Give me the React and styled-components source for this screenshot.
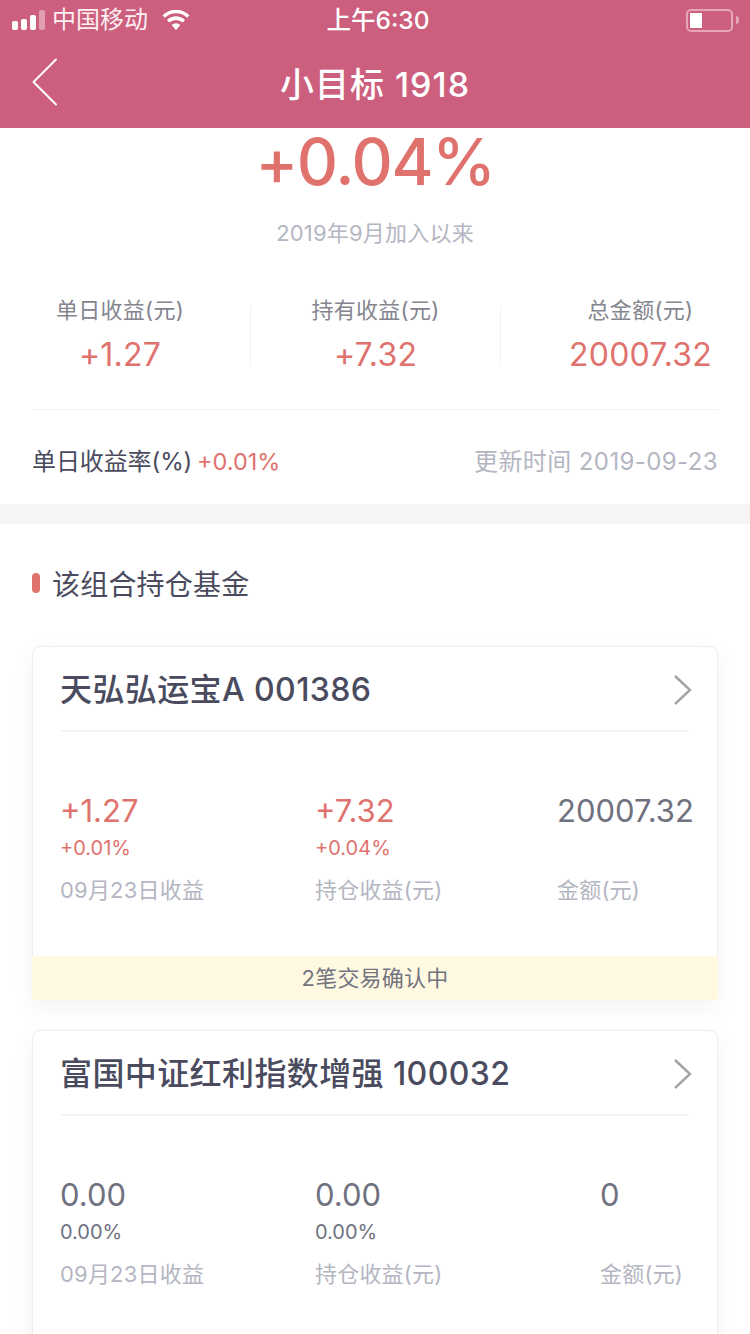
import React from "react";
import styled, { createGlobalStyle } from "styled-components";

const RED = "#e0726e";

const funds = [
  {
    name: "天弘弘运宝A 001386",
    active: true,
    pending: "2笔交易确认中",
    day: "+1.27",
    dayRate: "+0.01%",
    hold: "+7.32",
    holdRate: "+0.04%",
    amount: "20007.32",
    amountLeft: 557,
  },
  {
    name: "富国中证红利指数增强 100032",
    active: false,
    day: "0.00",
    dayRate: "0.00%",
    hold: "0.00",
    holdRate: "0.00%",
    amount: "0",
    amountLeft: 600,
  },
];

export default function App() {
  return (
    <>
      <GlobalStyle />
      <Page>
        <Header>
          <StatusBar>
            <StatusLeft>
              <Signal>
                <SignalBar $h={9} />
                <SignalBar $h={11} />
                <SignalBar $h={15} />
                <SignalBar $h={20} $dim />
              </Signal>
              <span>中国移动</span>
              <WifiIcon />
            </StatusLeft>
            <Clock>上午6:30</Clock>
            <Battery>
              <BatteryShell>
                <BatteryFill />
              </BatteryShell>
              <BatteryTip />
            </Battery>
          </StatusBar>
          <NavBar>
            <BackButton>
              <svg width="26" height="48" viewBox="0 0 26 48" fill="none">
                <path d="M24 1.5 L1.5 24 L24 46.5" stroke="#fff" strokeWidth="2" strokeLinecap="round" strokeLinejoin="round" />
              </svg>
            </BackButton>
            <NavTitle>小目标 1918</NavTitle>
          </NavBar>
        </Header>

        <Summary>
          <HeroValue>+0.04%</HeroValue>
          <HeroNote>2019年9月加入以来</HeroNote>
          <Stats>
            <Stat $pr={10}>
              <StatLabel>单日收益(元)</StatLabel>
              <StatValue>+1.27</StatValue>
            </Stat>
            <Stat $divider>
              <StatLabel>持有收益(元)</StatLabel>
              <StatValue>+7.32</StatValue>
            </Stat>
            <Stat $divider $pl={30}>
              <StatLabel>总金额(元)</StatLabel>
              <StatValue>20007.32</StatValue>
            </Stat>
          </Stats>
          <SummaryFooter>
            <RateBlock>
              单日收益率(%) <RateValue>+0.01%</RateValue>
            </RateBlock>
            <UpdateTime>更新时间 2019-09-23</UpdateTime>
          </SummaryFooter>
        </Summary>

        <Gap />

        <Holdings>
          <SectionTitle>
            <Marker />
            该组合持仓基金
          </SectionTitle>
          {funds.map((f) => (
            <Card key={f.name}>
              <CardHead>
                <FundName>{f.name}</FundName>
                <svg width="20" height="32" viewBox="0 0 20 32" fill="none">
                  <path d="M2 2 L17 16 L2 30" stroke="#a3a3a3" strokeWidth="2.4" />
                </svg>
              </CardHead>
              <Metrics>
                <Metric $left={27}>
                  <MetricValue $active={f.active}>{f.day}</MetricValue>
                  <MetricRate $active={f.active}>{f.dayRate}</MetricRate>
                  <MetricLabel>09月23日收益</MetricLabel>
                </Metric>
                <Metric $left={282}>
                  <MetricValue $active={f.active}>{f.hold}</MetricValue>
                  <MetricRate $active={f.active}>{f.holdRate}</MetricRate>
                  <MetricLabel>持仓收益(元)</MetricLabel>
                </Metric>
                <Metric $left={f.amountLeft - 33}>
                  <MetricValue>{f.amount}</MetricValue>
                  <MetricRate>&nbsp;</MetricRate>
                  <MetricLabel>金额(元)</MetricLabel>
                </Metric>
              </Metrics>
              {f.pending && <Pending>{f.pending}</Pending>}
            </Card>
          ))}
        </Holdings>
      </Page>
    </>
  );
}

function WifiIcon() {
  return (
    <WifiSvg width="28" height="20" viewBox="0 0 28 20">
      <path d="M14 20 L9.6 15 A6.4 6.4 0 0 1 18.4 15 Z" fill="#fff" />
      <path d="M7.4 12.6 L5 10 A12.8 12.8 0 0 1 23 10 L20.6 12.6 A9.4 9.4 0 0 0 7.4 12.6 Z" fill="#fff" />
      <path d="M2.9 7.7 L0.5 5.2 A19.4 19.4 0 0 1 27.5 5.2 L25.1 7.7 A16 16 0 0 0 2.9 7.7 Z" fill="#fff" />
    </WifiSvg>
  );
}

const GlobalStyle = createGlobalStyle`
  html, body { margin: 0; padding: 0; background: #fff; }
  body { font-family: Inter, "Noto Sans CJK SC", sans-serif; }
  * { box-sizing: border-box; }
`;

const Page = styled.div`
  width: 750px;
  height: 1334px;
  overflow: hidden;
  background: #fff;
`;

const Header = styled.header`
  height: 128px;
  background: #cd5f7e;
  color: #fff;
`;

const StatusBar = styled.div`
  height: 40px;
  position: relative;
  display: flex;
  align-items: center;
  justify-content: space-between;
  padding: 0 11px 0 12px;
`;

const StatusLeft = styled.div`
  display: flex;
  align-items: center;
  font-size: 24px;
  line-height: 38px;
  color: #fdeef2;
  span { margin-left: 7px; }
`;

const Signal = styled.div`
  display: flex;
  align-items: flex-end;
  gap: 3px;
  height: 20px;
`;

const SignalBar = styled.i`
  display: block;
  width: 6px;
  height: ${(p) => p.$h}px;
  border-radius: 2px;
  background: ${(p) => (p.$dim ? "rgba(255,255,255,0.4)" : "#fff")};
`;

const WifiSvg = styled.svg`
  margin-left: 14px;
`;

const Clock = styled.div`
  position: absolute;
  left: 6px;
  right: 0;
  top: 0;
  text-align: center;
  font-size: 24.5px;
  line-height: 40px;
  font-weight: 500;
`;

const Battery = styled.div`
  display: flex;
  align-items: center;
  gap: 3px;
`;

const BatteryShell = styled.div`
  width: 47px;
  height: 23px;
  border: 2px solid rgba(255, 255, 255, 0.45);
  border-radius: 5px;
  padding: 2px;
`;

const BatteryFill = styled.div`
  width: 12px;
  height: 100%;
  background: #fff;
`;

const BatteryTip = styled.div`
  width: 3px;
  height: 8px;
  background: rgba(255, 255, 255, 0.45);
  border-radius: 0 3px 3px 0;
`;

const NavBar = styled.div`
  height: 88px;
  position: relative;
  display: flex;
  align-items: center;
  justify-content: center;
`;

const BackButton = styled.div`
  position: absolute;
  left: 32px;
  top: 18px;
  line-height: 0;
`;

const NavTitle = styled.h1`
  margin: 0 0 4px;
  font-size: 34px;
  font-weight: 500;
  letter-spacing: 1px;
`;

const Summary = styled.section`
  height: 376px;
`;

const HeroValue = styled.div`
  height: 68px;
  line-height: 68px;
  text-align: center;
  font-size: 64px;
  font-weight: 500;
  letter-spacing: -1.3px;
  color: ${RED};
`;

const HeroNote = styled.div`
  margin-top: 22px;
  text-align: center;
  font-size: 22px;
  line-height: 30px;
  letter-spacing: 0.2px;
  color: #b4b6c2;
`;

const Stats = styled.div`
  display: grid;
  grid-template-columns: repeat(3, 250px);
  margin-top: 57px;
`;

const Stat = styled.div`
  height: 60px;
  text-align: center;
  padding-left: ${(p) => p.$pl || 0}px;
  padding-right: ${(p) => p.$pr || 0}px;
  border-left: ${(p) => (p.$divider ? "1px solid #f3f3f3" : "none")};
`;

const StatLabel = styled.div`
  margin-top: -10px;
  font-size: 22px;
  line-height: 30px;
  letter-spacing: 0.3px;
  color: #84858f;
`;

const StatValue = styled.div`
  margin-top: 11px;
  font-size: 32px;
  line-height: 38px;
  letter-spacing: 0.2px;
  color: ${RED};
`;

const SummaryFooter = styled.div`
  margin: 44px 32px 0;
  padding-top: 35px;
  border-top: 1px solid #f2f2f2;
  display: flex;
  align-items: center;
  justify-content: space-between;
`;

const RateBlock = styled.div`
  font-size: 24px;
  line-height: 34px;
  letter-spacing: -0.1px;
  color: #4a4b5e;
`;

const RateValue = styled.span`
  margin-left: -2px;
  font-size: 23.5px;
  letter-spacing: 0;
  color: ${RED};
`;

const UpdateTime = styled.div`
  font-size: 24px;
  line-height: 34px;
  letter-spacing: 0.4px;
  color: #b4b6c2;
`;

const Gap = styled.div`
  height: 20px;
  background: #f5f5f5;
`;

const Holdings = styled.section`
  padding: 0 32px;
`;

const SectionTitle = styled.h2`
  margin: 0 0 4px;
  height: 118px;
  display: flex;
  align-items: center;
  font-size: 28px;
  font-weight: 400;
  letter-spacing: 0.2px;
  color: #4a4b5e;
`;

const Marker = styled.i`
  width: 8px;
  height: 20px;
  border-radius: 4px;
  background: ${RED};
  margin-right: 12px;
`;

const Card = styled.article`
  position: relative;
  width: 686px;
  height: 354px;
  margin-bottom: 30px;
  border: 1px solid #ececec;
  border-radius: 8px;
  background: #fff;
  box-shadow: 0 8px 24px rgba(0, 0, 0, 0.05);
`;

const CardHead = styled.div`
  height: 85px;
  margin: 0 28px;
  padding-bottom: 4px;
  border-bottom: 2px solid #f5f5f5;
  display: flex;
  align-items: center;
  justify-content: space-between;
  svg { margin-right: -4px; margin-top: 7px; }
`;

const FundName = styled.div`
  margin-left: -1px;
  font-size: 32px;
  font-weight: 500;
  letter-spacing: 0.4px;
  color: #4a4b5e;
`;

const Metrics = styled.div`
  position: relative;
  height: 170px;
  margin-top: 60px;
`;

const Metric = styled.div`
  position: absolute;
  left: ${(p) => p.$left}px;
  top: 0;
  white-space: nowrap;
`;

const MetricValue = styled.div`
  font-size: 31px;
  line-height: 38px;
  color: ${(p) => (p.$active ? RED : "#70717f")};
`;

const MetricRate = styled.div`
  margin-top: 5px;
  font-size: 20px;
  line-height: 26px;
  color: ${(p) => (p.$active ? RED : "#70717f")};
`;

const MetricLabel = styled.div`
  margin-top: 14px;
  font-size: 22px;
  line-height: 30px;
  letter-spacing: 0.2px;
  color: #b4b6c2;
`;

const Pending = styled.div`
  position: absolute;
  left: -1px;
  right: -1px;
  bottom: -1px;
  height: 44px;
  background: #fff9e2;
  text-align: center;
  font-size: 22px;
  line-height: 44px;
  letter-spacing: 0.2px;
  color: #73747f;
`;
